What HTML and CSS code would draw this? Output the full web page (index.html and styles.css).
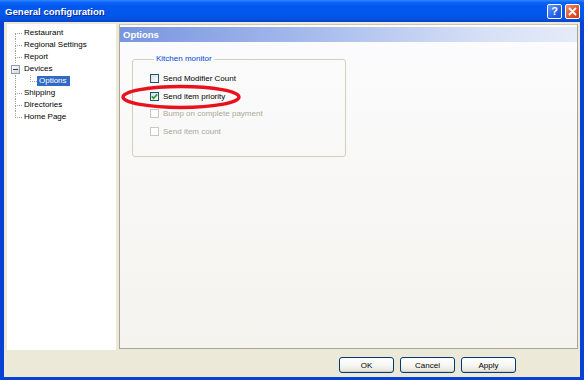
FILE: index.html
```html
<!DOCTYPE html>
<html lang="en">
<head>
    <meta charset="UTF-8">
    <title>General configuration</title>
    <link rel="stylesheet" href="styles.css">
</head>
<body>
    <div class="window">
        <div class="titlebar">
            <span class="title">General configuration</span>
            <div class="caption-buttons">
                <span class="cap-btn cap-help">?</span>
                <span class="cap-btn cap-close">
                    <svg width="9" height="9" viewBox="0 0 9 9"><path d="M1.5 1.5 L7.5 7.5 M7.5 1.5 L1.5 7.5" stroke="#fff" stroke-width="1.8" stroke-linecap="round"/></svg>
                </span>
            </div>
        </div>

        <div class="client">
            <div class="panes">
                <!-- Left tree -->
                <div class="tree">
                    <div class="node first"><span class="branch"></span><span class="label">Restaurant</span></div>
                    <div class="node"><span class="branch"></span><span class="label">Regional Settings</span></div>
                    <div class="node"><span class="branch"></span><span class="label">Report</span></div>
                    <div class="node">
                        <span class="branch expander"><span class="box"></span></span>
                        <span class="label">Devices</span>
                    </div>
                    <div class="node child">
                        <span class="pipe"></span>
                        <span class="branch last"></span>
                        <span class="label selected">Options</span>
                    </div>
                    <div class="node"><span class="branch"></span><span class="label">Shipping</span></div>
                    <div class="node"><span class="branch"></span><span class="label">Directories</span></div>
                    <div class="node"><span class="branch last"></span><span class="label">Home Page</span></div>
                </div>

                <!-- Right page -->
                <div class="page">
                    <div class="page-header">Options</div>

                    <fieldset class="group">
                        <legend>Kitchen monitor</legend>
                        <div class="option">
                            <span class="check"></span>
                            <span>Send Modifier Count</span>
                        </div>
                        <div class="option">
                            <span class="check">
                                <svg width="7" height="7" viewBox="0 0 7 7"><path d="M0.8 3.4 L2.6 5.3 L6.2 1.4" fill="none" stroke="#21a121" stroke-width="1.6"/></svg>
                            </span>
                            <span>Send item priority</span>
                        </div>
                        <div class="option disabled">
                            <span class="check"></span>
                            <span>Bump on complete payment</span>
                        </div>
                        <div class="option disabled">
                            <span class="check"></span>
                            <span>Send item count</span>
                        </div>
                    </fieldset>

                    <svg class="highlight" width="122" height="26" viewBox="0 0 122 26">
                        <ellipse cx="60" cy="13" rx="58" ry="10.5" fill="none" stroke="#e8121c" stroke-width="3.4"/>
                    </svg>
                </div>
            </div>

            <div class="actions">
                <button class="btn">OK</button>
                <button class="btn">Cancel</button>
                <button class="btn">Apply</button>
            </div>
        </div>
    </div>
</body>
</html>
```

FILE: styles.css
```css
* {
    margin: 0;
    padding: 0;
    box-sizing: border-box;
}

body {
    font-family: "Liberation Sans", Arial, sans-serif;
    font-size: 8px;
    color: #000;
    background: #0a44d6;
    width: 584px;
    height: 380px;
    overflow: hidden;
}

/* Window frame */
.window {
    width: 584px;
    height: 380px;
    display: flex;
    flex-direction: column;
    background: #0842d4;
    padding: 0 4px 3px 4px;
}

.titlebar {
    height: 22px;
    margin: 0 -4px;
    padding: 0 4px 0 5px;
    display: flex;
    align-items: center;
    justify-content: space-between;
    background: linear-gradient(#2e87ff 0%, #0a63f5 12%, #0058ee 30%, #0057ea 70%, #0450dc 88%, #0842d4 100%);
}

.title {
    color: #fff;
    font-weight: bold;
    font-size: 9.6px;
    text-shadow: 1px 1px 0 #0a2a9c;
}

.caption-buttons {
    display: flex;
    gap: 3px;
}

.cap-btn {
    width: 15px;
    height: 15px;
    border: 1px solid #fff;
    border-radius: 2px;
    display: flex;
    align-items: center;
    justify-content: center;
    color: #fff;
    font-weight: bold;
    font-size: 11px;
}

.cap-help {
    background: linear-gradient(135deg, #6a9cff, #2661e8 60%, #1c4fd0);
}

.cap-close {
    background: linear-gradient(135deg, #f0916f, #e0552c 55%, #c83c16);
}

/* Client area */
.client {
    flex: 1;
    background: #ece9d8;
    display: flex;
    flex-direction: column;
}

.panes {
    display: flex;
    gap: 3px;
    padding: 2px 2px 0 3px;
    height: 328px;
}

/* Tree */
.tree {
    width: 109px;
    background: #fff;
    padding-top: 3px;
}

.node {
    display: flex;
    align-items: center;
    height: 12px;
    padding-left: 8px;
    white-space: nowrap;
}

.branch {
    width: 7px;
    height: 12px;
    display: flex;
    flex-direction: column;
    flex-shrink: 0;
}

.branch::before {
    content: '';
    height: 6px;
    border-left: 1px dotted #a0a0a0;
    border-bottom: 1px dotted #a0a0a0;
}

.branch::after {
    content: '';
    height: 6px;
    border-left: 1px dotted #a0a0a0;
}

.node.first .branch::before {
    border-left: none;
}

.branch.last::after {
    border-left: none;
}

.branch.expander {
    flex-direction: row;
    align-items: center;
    margin-left: -4px;
    width: 11px;
}

.branch.expander::before,
.branch.expander::after {
    display: none;
}

.box {
    width: 9px;
    height: 9px;
    border: 1px solid #8f9bab;
    background: linear-gradient(135deg, #fff, #d9d7cc);
    display: flex;
    align-items: center;
    justify-content: center;
}

.box::after {
    content: '';
    width: 5px;
    border-top: 1px solid #1c3f7c;
}

.pipe {
    width: 15px;
    height: 12px;
    border-left: 1px dotted #a0a0a0;
    flex-shrink: 0;
}

.label {
    padding: 0 2px;
    line-height: 10px;
}

.label.selected {
    background: #316ac5;
    color: #fff;
    padding: 0 3px 0 2px;
}

/* Right page */
.page {
    width: 459px;
    border: 1px solid #a7a698;
    border-top-color: #c9c7ba;
    background: linear-gradient(#fcfcfe, #f4f3ee);
    position: relative;
    height: 325px;
}

.page-header {
    margin-top: 2px;
    height: 15px;
    padding-left: 3px;
    display: flex;
    align-items: center;
    color: #fff;
    font-weight: bold;
    font-size: 9.5px;
    background: linear-gradient(to right, #7895df, #a4b9ec 40%, #d7e0f6 80%, #e6ebf8);
}

.group {
    margin: 12px 0 0 12px;
    width: 214px;
    height: 103px;
    border: 1px solid #d0d0bf;
    border-radius: 3px;
    padding: 6px 0 0 17px;
}

.group legend {
    color: #0046d5;
    margin-left: 4px;
    padding: 0 2px;
    line-height: 10px;
}

.option {
    display: flex;
    align-items: center;
    gap: 4px;
    height: 17.5px;
}

.check {
    width: 9px;
    height: 9px;
    border: 1px solid #1c5180;
    background: linear-gradient(135deg, #dcdcd7, #fff);
    display: flex;
    align-items: center;
    justify-content: center;
}

.option.disabled {
    color: #aca899;
}

.option.disabled .check {
    border-color: #cac8bb;
    background: #fff;
}

/* Red marker drawn over the form */
.highlight {
    position: absolute;
    left: 1px;
    top: 59px;
}

/* Dialog buttons */
.actions {
    display: flex;
    justify-content: flex-end;
    gap: 6px;
    padding: 7px 64px 0 0;
}

.btn {
    width: 55px;
    height: 16px;
    font-family: inherit;
    font-size: 8px;
    color: #000;
    border: 1px solid #003c74;
    border-radius: 3px;
    background: linear-gradient(#fff, #f4f4f0 60%, #e3e1d6);
    box-shadow: inset 0 -1px 0 #d6d0c5;
}
```
